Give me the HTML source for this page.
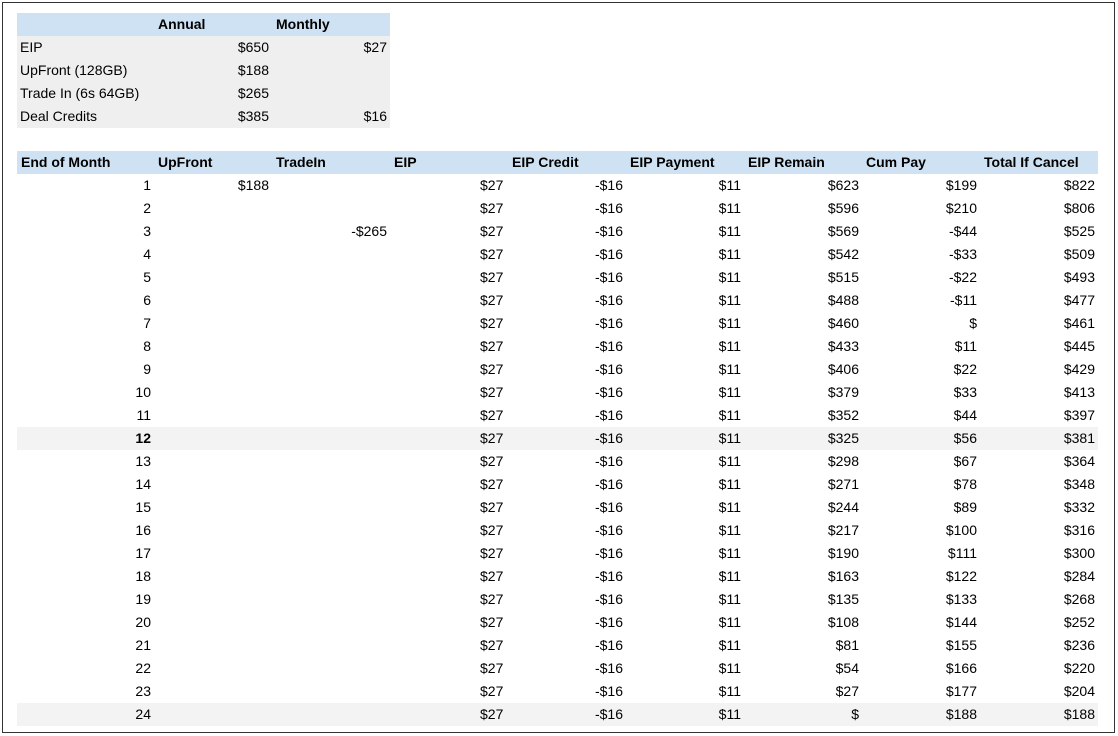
<!DOCTYPE html>
<html><head><meta charset="utf-8"><style>
html,body{margin:0;padding:0;background:#fff;}
body{width:1118px;height:736px;position:relative;overflow:hidden;font-family:"Liberation Sans",Arial,sans-serif;font-size:14px;color:#000;}
.frame{position:absolute;left:2px;top:2px;width:1111px;height:729px;border:1px solid #333;}
table{position:absolute;border-collapse:collapse;table-layout:fixed;}
td{height:23px;padding:0 3px;white-space:nowrap;overflow:hidden;line-height:23px;text-align:right;}
tr.h td{background:#cfe2f3;font-weight:bold;text-align:left;padding-left:4px;}
#t1{left:17px;top:13px;width:373px;}
#t1 tr.b td{background:#efefef;}
#t1 td.l{text-align:left;}
#t2{left:17px;top:151px;width:1081px;}
tr.g td{background:#f3f3f3;}
tr.bold td:first-child{font-weight:bold;}
</style></head><body>
<div class="frame"></div>
<table id="t1">
<colgroup><col style="width:137px"><col style="width:118px"><col style="width:118px"></colgroup>
<tr class="h"><td></td><td>Annual</td><td>Monthly</td></tr>
<tr class="b"><td class="l">EIP</td><td>$650</td><td>$27</td></tr>
<tr class="b"><td class="l">UpFront (128GB)</td><td>$188</td><td></td></tr>
<tr class="b"><td class="l">Trade In (6s 64GB)</td><td>$265</td><td></td></tr>
<tr class="b"><td class="l">Deal Credits</td><td>$385</td><td>$16</td></tr>
</table>
<table id="t2">
<colgroup><col style="width:137px"><col style="width:118px"><col style="width:118px"><col style="width:118px"><col style="width:118px"><col style="width:118px"><col style="width:118px"><col style="width:118px"><col style="width:118px"></colgroup>
<tr class="h"><td>End of Month</td><td>UpFront</td><td>TradeIn</td><td>EIP</td><td>EIP Credit</td><td>EIP Payment</td><td>EIP Remain</td><td>Cum Pay</td><td>Total If Cancel</td></tr>
<tr><td>1</td><td>$188</td><td></td><td style="text-align:left;padding-left:90px">$27</td><td>-$16</td><td>$11</td><td>$623</td><td>$199</td><td>$822</td></tr>
<tr><td>2</td><td></td><td></td><td style="text-align:left;padding-left:90px">$27</td><td>-$16</td><td>$11</td><td>$596</td><td>$210</td><td>$806</td></tr>
<tr><td>3</td><td></td><td>-$265</td><td style="text-align:left;padding-left:90px">$27</td><td>-$16</td><td>$11</td><td>$569</td><td>-$44</td><td>$525</td></tr>
<tr><td>4</td><td></td><td></td><td style="text-align:left;padding-left:90px">$27</td><td>-$16</td><td>$11</td><td>$542</td><td>-$33</td><td>$509</td></tr>
<tr><td>5</td><td></td><td></td><td style="text-align:left;padding-left:90px">$27</td><td>-$16</td><td>$11</td><td>$515</td><td>-$22</td><td>$493</td></tr>
<tr><td>6</td><td></td><td></td><td style="text-align:left;padding-left:90px">$27</td><td>-$16</td><td>$11</td><td>$488</td><td>-$11</td><td>$477</td></tr>
<tr><td>7</td><td></td><td></td><td style="text-align:left;padding-left:90px">$27</td><td>-$16</td><td>$11</td><td>$460</td><td>$</td><td>$461</td></tr>
<tr><td>8</td><td></td><td></td><td style="text-align:left;padding-left:90px">$27</td><td>-$16</td><td>$11</td><td>$433</td><td>$11</td><td>$445</td></tr>
<tr><td>9</td><td></td><td></td><td style="text-align:left;padding-left:90px">$27</td><td>-$16</td><td>$11</td><td>$406</td><td>$22</td><td>$429</td></tr>
<tr><td>10</td><td></td><td></td><td style="text-align:left;padding-left:90px">$27</td><td>-$16</td><td>$11</td><td>$379</td><td>$33</td><td>$413</td></tr>
<tr><td>11</td><td></td><td></td><td style="text-align:left;padding-left:90px">$27</td><td>-$16</td><td>$11</td><td>$352</td><td>$44</td><td>$397</td></tr>
<tr class="g bold"><td>12</td><td></td><td></td><td style="text-align:left;padding-left:90px">$27</td><td>-$16</td><td>$11</td><td>$325</td><td>$56</td><td>$381</td></tr>
<tr><td>13</td><td></td><td></td><td style="text-align:left;padding-left:90px">$27</td><td>-$16</td><td>$11</td><td>$298</td><td>$67</td><td>$364</td></tr>
<tr><td>14</td><td></td><td></td><td style="text-align:left;padding-left:90px">$27</td><td>-$16</td><td>$11</td><td>$271</td><td>$78</td><td>$348</td></tr>
<tr><td>15</td><td></td><td></td><td style="text-align:left;padding-left:90px">$27</td><td>-$16</td><td>$11</td><td>$244</td><td>$89</td><td>$332</td></tr>
<tr><td>16</td><td></td><td></td><td style="text-align:left;padding-left:90px">$27</td><td>-$16</td><td>$11</td><td>$217</td><td>$100</td><td>$316</td></tr>
<tr><td>17</td><td></td><td></td><td style="text-align:left;padding-left:90px">$27</td><td>-$16</td><td>$11</td><td>$190</td><td>$111</td><td>$300</td></tr>
<tr><td>18</td><td></td><td></td><td style="text-align:left;padding-left:90px">$27</td><td>-$16</td><td>$11</td><td>$163</td><td>$122</td><td>$284</td></tr>
<tr><td>19</td><td></td><td></td><td style="text-align:left;padding-left:90px">$27</td><td>-$16</td><td>$11</td><td>$135</td><td>$133</td><td>$268</td></tr>
<tr><td>20</td><td></td><td></td><td style="text-align:left;padding-left:90px">$27</td><td>-$16</td><td>$11</td><td>$108</td><td>$144</td><td>$252</td></tr>
<tr><td>21</td><td></td><td></td><td style="text-align:left;padding-left:90px">$27</td><td>-$16</td><td>$11</td><td>$81</td><td>$155</td><td>$236</td></tr>
<tr><td>22</td><td></td><td></td><td style="text-align:left;padding-left:90px">$27</td><td>-$16</td><td>$11</td><td>$54</td><td>$166</td><td>$220</td></tr>
<tr><td>23</td><td></td><td></td><td style="text-align:left;padding-left:90px">$27</td><td>-$16</td><td>$11</td><td>$27</td><td>$177</td><td>$204</td></tr>
<tr class="g"><td>24</td><td></td><td></td><td style="text-align:left;padding-left:90px">$27</td><td>-$16</td><td>$11</td><td>$</td><td>$188</td><td>$188</td></tr>
</table>
</body></html>
